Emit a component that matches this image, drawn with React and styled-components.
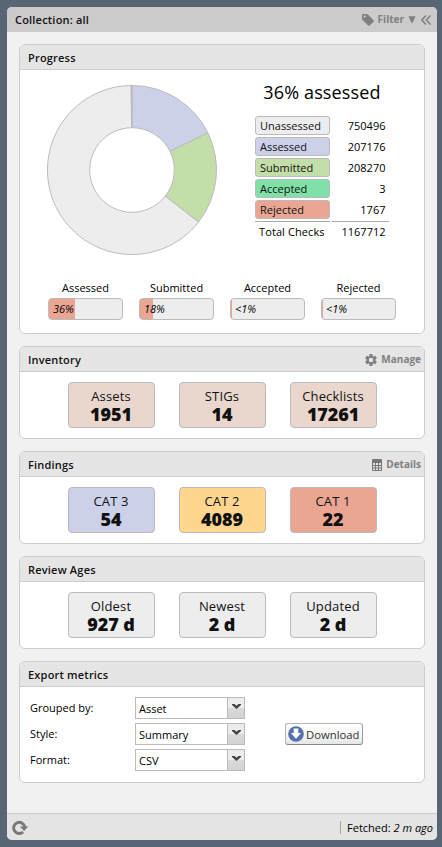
import React from "react";
import styled, { createGlobalStyle } from "styled-components";

const GlobalStyle = createGlobalStyle`
  * { box-sizing: border-box; }
  body {
    margin: 0;
    background: #586574;
    font: 11px/15px "Open Sans", sans-serif;
    color: #000;
  }
`;

const Page = styled.div`
  height: 847px;
  padding: 7px 5px 7px 7px;
`;

const Panel = styled.main`
  display: flex;
  flex-direction: column;
  height: 833px;
  border-radius: 5px;
  overflow: hidden;
  background: #f1f1f1;
`;

const PanelHeader = styled.header`
  display: flex;
  align-items: center;
  height: 25px;
  padding: 0 6px 0 8px;
  background: #cbcbcb;
  color: #111;
`;

const Title = styled.h1`
  flex: 1;
  margin: 0;
  font-size: 11px;
  font-weight: 600;
  letter-spacing: 0.2px;
`;

const Tool = styled.span`
  display: flex;
  align-items: center;
  gap: ${(p) => p.$gap || 4}px;
  color: #808080;
  font-size: 10px;
  font-weight: 700;
  svg { display: block; }
`;

const CollapseIcon = styled.svg`
  display: block;
  margin-left: 5px;
`;

const Cards = styled.div`
  flex: 1;
  display: flex;
  flex-direction: column;
  gap: 12px;
  padding: 12px 12px 0;
`;

const CardBox = styled.section`
  height: ${(p) => p.$height}px;
  border: 1px solid #ccc;
  border-radius: 6px;
  overflow: hidden;
  background: #fff;
`;

const CardHeader = styled.header`
  display: flex;
  align-items: center;
  height: 25px;
  padding: 1px 3px 0 8px;
  border-bottom: 1px solid #ccc;
  background: #e5e5e5;
  color: #111;
`;

const Overview = styled.div`
  display: flex;
  height: 210px;
  padding: 15px 0 0 27px;
`;

const Stats = styled.div`
  display: flex;
  flex-direction: column;
  width: 134px;
  margin-left: 37px;
`;

const Headline = styled.div`
  margin-top: -5px;
  height: 24px;
  font-size: 18px;
  line-height: 24px;
  letter-spacing: 0.15px;
  text-align: center;
`;

const StatGrid = styled.div`
  display: grid;
  grid-template-columns: 75px 57px;
  gap: 2px;
  margin-top: 12px;
`;

const StatLabel = styled.div`
  height: 19px;
  padding: 1px 4px;
  border: 1px solid #bbb;
  border-radius: 3px;
  background: ${(p) => p.$color};
  color: #111;
`;

const StatValue = styled.div`
  padding: 2px 3.5px 0 0;
  text-align: right;
`;

const Total = styled.div`
  height: 20px;
  padding: 2px 3.5px 0 4px;
  border-top: 1px solid #aaa;
  font-weight: 500;
  letter-spacing: ${(p) => (p.$number ? "0" : "0.1px")};
  text-align: ${(p) => (p.$number ? "right" : "left")};
  white-space: nowrap;
`;

const Meters = styled.div`
  display: flex;
  gap: 16px;
  padding-left: 28px;
`;

const MeterCell = styled.div`
  width: 75px;
  text-align: center;
  font-weight: 500;
`;

const MeterTrack = styled.div`
  height: 22px;
  margin-top: 3px;
  padding: 2px 4px;
  border: 1px solid #bbb;
  border-radius: 4px;
  background: linear-gradient(to right, #eaa692 ${(p) => p.$fill}px, #ededed ${(p) => p.$fill}px);
  font-style: italic;
  font-weight: 400;
  text-align: left;
`;

const Tiles = styled.div`
  display: flex;
  justify-content: center;
  gap: 24px;
  padding-top: 10px;
`;

const TileBox = styled.div`
  width: 87px;
  height: 46px;
  padding-top: 4px;
  border: 1px solid #bbb;
  border-radius: 4px;
  background: ${(p) => p.$color};
  color: #111;
  text-align: center;
`;

const TileName = styled.div`
  font-size: 13px;
  line-height: 18px;
  letter-spacing: 0.15px;
`;

const TileValue = styled.div`
  font-size: 18px;
  line-height: 18px;
  font-weight: 800;
  letter-spacing: -0.1px;
`;

const ExportForm = styled.div`
  display: grid;
  grid-template-columns: 105px 110px 78px;
  grid-auto-rows: 22px;
  row-gap: 4px;
  padding: 10px 0 0 10px;
`;

const FieldLabel = styled.label`
  grid-column: 1;
  padding-top: 3px;
`;

const Combo = styled.div`
  grid-column: 2;
  display: flex;
  border: 1px solid #bbb;
  background: #fff;
`;

const ComboText = styled.span`
  flex: 1;
  padding: 3px 3px 0;
`;

const ComboTrigger = styled.span`
  display: flex;
  align-items: center;
  justify-content: center;
  width: 17px;
  padding-bottom: 2px;
  border-left: 1px solid #bbb;
  background: linear-gradient(#ececec 0 50%, #dadada 50%, #d2d2d2);
`;

const DownloadButton = styled.button`
  grid-area: 2 / 3;
  display: flex;
  align-items: center;
  gap: 2px;
  width: 78px;
  height: 22px;
  margin-left: 40px;
  padding: 0 0 0 2px;
  border: 1px solid #b4b4b4;
  border-bottom-color: #888;
  border-right-color: #999;
  border-radius: 3px;
  background: linear-gradient(#fff, #f8f8f8 50%, #e6e6e6);
  color: #333;
  font: 11.3px/15px "Open Sans", sans-serif;
  svg { flex: none; }
`;

const Footer = styled.footer`
  display: flex;
  align-items: center;
  justify-content: space-between;
  height: 27px;
  padding: 0 4px 0 5px;
  border-top: 1px solid #ccc;
  background: #e4e4e4;
`;

const Fetched = styled.div`
  display: flex;
  align-items: center;
  gap: 6px;
  padding-top: 1px;
  &::before {
    content: "";
    width: 1px;
    height: 13px;
    background: #a9a891;
  }
`;

const stats = [
  { name: "Unassessed", value: 750496, color: "#ededed" },
  { name: "Assessed", value: 207176, color: "#cdd0e9" },
  { name: "Submitted", value: 208270, color: "#c4dea9" },
  { name: "Accepted", value: 3, color: "#80e0a7" },
  { name: "Rejected", value: 1767, color: "#eaa692" },
];

const meters = [
  { name: "Assessed", text: "36%", fill: 26 },
  { name: "Submitted", text: "18%", fill: 13 },
  { name: "Accepted", text: "<1%", fill: 1 },
  { name: "Rejected", text: "<1%", fill: 1 },
];

const TOTAL = stats.reduce((sum, s) => sum + s.value, 0);

function slicePath(start, end) {
  const point = (r, t) => {
    const a = t * 2 * Math.PI;
    return `${(85 + r * Math.sin(a)).toFixed(3)} ${(85 - r * Math.cos(a)).toFixed(3)}`;
  };
  const large = end - start > 0.5 ? 1 : 0;
  return `M${point(84.5, start)}A84.5 84.5 0 ${large} 1 ${point(84.5, end)}L${point(42.3, end)}A42.3 42.3 0 ${large} 0 ${point(42.3, start)}Z`;
}

function Donut() {
  let at = 0;
  return (
    <svg width="171" height="171" viewBox="0 0 171 171" stroke="#bbb">
      {[1, 2, 3, 0, 4].map((i) => {
        const start = at;
        at += stats[i].value / TOTAL;
        return <path key={i} d={slicePath(start, at)} fill={stats[i].color} />;
      })}
    </svg>
  );
}

const TagIcon = () => (
  <svg width="12" height="12" viewBox="0 0 12 12" fill="#808080">
    <path fillRule="evenodd" d="M0 1Q0 0 1 0H4.7Q5.4 0 6 .6L11.6 6.2Q12.3 7 11.6 7.7L7.7 11.6Q7 12.3 6.2 11.6L.6 6Q0 5.4 0 4.7ZM2.6 1.5A1.1 1.1 0 1 0 2.6 3.7A1.1 1.1 0 1 0 2.6 1.5Z" />
  </svg>
);

const TriangleIcon = () => (
  <svg width="8" height="8" viewBox="0 0 8 8" fill="#808080">
    <path d="M.4 .3H7.6L4 7.8Z" />
  </svg>
);

const GearIcon = () => (
  <svg width="12" height="12" viewBox="2.3 2.3 19.4 19.4" fill="#808080">
    <path d="M19.14 12.94c.04-.3.06-.61.06-.94 0-.32-.02-.64-.07-.94l2.03-1.58c.18-.14.23-.41.12-.61l-1.92-3.32c-.12-.22-.37-.29-.59-.22l-2.39.96c-.5-.38-1.03-.7-1.62-.94l-.36-2.54c-.04-.24-.24-.41-.48-.41h-3.84c-.24 0-.43.17-.47.41l-.36 2.54c-.59.24-1.13.57-1.62.94l-2.39-.96c-.22-.08-.47 0-.59.22L2.74 8.87c-.12.21-.08.47.12.61l2.03 1.58c-.05.3-.09.63-.09.94s.02.64.07.94l-2.03 1.58c-.18.14-.23.41-.12.61l1.92 3.32c.12.22.37.29.59.22l2.39-.96c.5.38 1.03.7 1.62.94l.36 2.54c.05.24.24.41.48.41h3.84c.24 0 .44-.17.47-.41l.36-2.54c.59-.24 1.13-.56 1.62-.94l2.39.96c.22.08.47 0 .59-.22l1.92-3.32c.12-.22.07-.47-.12-.61l-2.01-1.58zM12 15.6A3.6 3.6 0 1 1 12 8.4A3.6 3.6 0 1 1 12 15.6z" />
  </svg>
);

const TableIcon = () => (
  <svg width="10" height="12" viewBox="0 0 10 12">
    <rect width="10" height="12" rx="1" fill="#777" />
    <path fill="#e5e5e5" d="M1 4H3V6H1ZM4 4H6V6H4ZM7 4H9V6H7ZM1 7H3V8.5H1ZM4 7H6V8.5H4ZM7 7H9V8.5H7ZM1 9.5H3V11H1ZM4 9.5H6V11H4ZM7 9.5H9V11H7Z" />
  </svg>
);

const RefreshIcon = () => (
  <svg width="17" height="15" viewBox="0 0 17 15">
    <path d="M11.1 12A5.6 5.6 0 1 1 12.8 7.2" fill="none" stroke="#7b7777" strokeWidth="2.9" />
    <path d="M7.8 6.4H16.3L12.1 11Z" fill="#7b7777" />
  </svg>
);

const DownIcon = () => (
  <svg width="16" height="16" viewBox="0 0 16 16">
    <circle cx="8" cy="8" r="7.8" fill="#5870b0" />
    <path d="M5.7 2.5H10.3V7H13L8 12.7L3 7H5.7Z" fill="#fff" />
  </svg>
);

const Chevron = () => (
  <svg width="9" height="6" viewBox="0 0 9 6">
    <path d="M0 0H2.5L4.5 1.7L6.5 0H9V1L4.5 5L0 1Z" fill="#444" />
  </svg>
);

function Card({ title, height, tool, children }) {
  return (
    <CardBox $height={height}>
      <CardHeader>
        <Title as="h2">{title}</Title>
        {tool}
      </CardHeader>
      {children}
    </CardBox>
  );
}

function TileRow({ items }) {
  return (
    <Tiles>
      {items.map(([name, value, color]) => (
        <TileBox key={name} $color={color}>
          <TileName>{name}</TileName>
          <TileValue>{value}</TileValue>
        </TileBox>
      ))}
    </Tiles>
  );
}

export default function App() {
  return (
    <Page>
      <GlobalStyle />
      <Panel>
        <PanelHeader>
          <Title>Collection: all</Title>
          <Tool $gap={4}>
            <TagIcon />
            Filter
            <TriangleIcon />
          </Tool>
          <CollapseIcon width="10" height="10" viewBox="0 0 10 10" fill="none" stroke="#808080" strokeWidth="1.5">
            <path d="M5 .5L.9 5L5 9.5M9.5 .5L5.4 5L9.5 9.5" />
          </CollapseIcon>
        </PanelHeader>
        <Cards>
          <Card title="Progress" height={290}>
            <Overview>
              <Donut />
              <Stats>
                <Headline>36% assessed</Headline>
                <StatGrid>
                  {stats.map((s) => (
                    <React.Fragment key={s.name}>
                      <StatLabel $color={s.color}>{s.name}</StatLabel>
                      <StatValue>{s.value}</StatValue>
                    </React.Fragment>
                  ))}
                  <Total>Total Checks</Total>
                  <Total $number>{TOTAL}</Total>
                </StatGrid>
              </Stats>
            </Overview>
            <Meters>
              {meters.map((m) => (
                <MeterCell key={m.name}>
                  {m.name}
                  <MeterTrack $fill={m.fill}>{m.text}</MeterTrack>
                </MeterCell>
              ))}
            </Meters>
          </Card>
          <Card title="Inventory" height={93} tool={<Tool><GearIcon />Manage</Tool>}>
            <TileRow items={[["Assets", "1951", "#e9d7cd"], ["STIGs", "14", "#e9d7cd"], ["Checklists", "17261", "#e9d7cd"]]} />
          </Card>
          <Card title="Findings" height={93} tool={<Tool><TableIcon />Details</Tool>}>
            <TileRow items={[["CAT 3", "54", "#cdd0e9"], ["CAT 2", "4089", "#ffd68f"], ["CAT 1", "22", "#eaa692"]]} />
          </Card>
          <Card title="Review Ages" height={93}>
            <TileRow items={[["Oldest", "927 d", "#ededed"], ["Newest", "2 d", "#ededed"], ["Updated", "2 d", "#ededed"]]} />
          </Card>
          <Card title="Export metrics" height={122}>
            <ExportForm>
              {[["Grouped by:", "Asset"], ["Style:", "Summary"], ["Format:", "CSV"]].map(([label, value]) => (
                <React.Fragment key={label}>
                  <FieldLabel>{label}</FieldLabel>
                  <Combo>
                    <ComboText>{value}</ComboText>
                    <ComboTrigger><Chevron /></ComboTrigger>
                  </Combo>
                </React.Fragment>
              ))}
              <DownloadButton><DownIcon />Download</DownloadButton>
            </ExportForm>
          </Card>
        </Cards>
        <Footer>
          <RefreshIcon />
          <Fetched>
            <span>Fetched: <i>2 m ago</i></span>
          </Fetched>
        </Footer>
      </Panel>
    </Page>
  );
}
